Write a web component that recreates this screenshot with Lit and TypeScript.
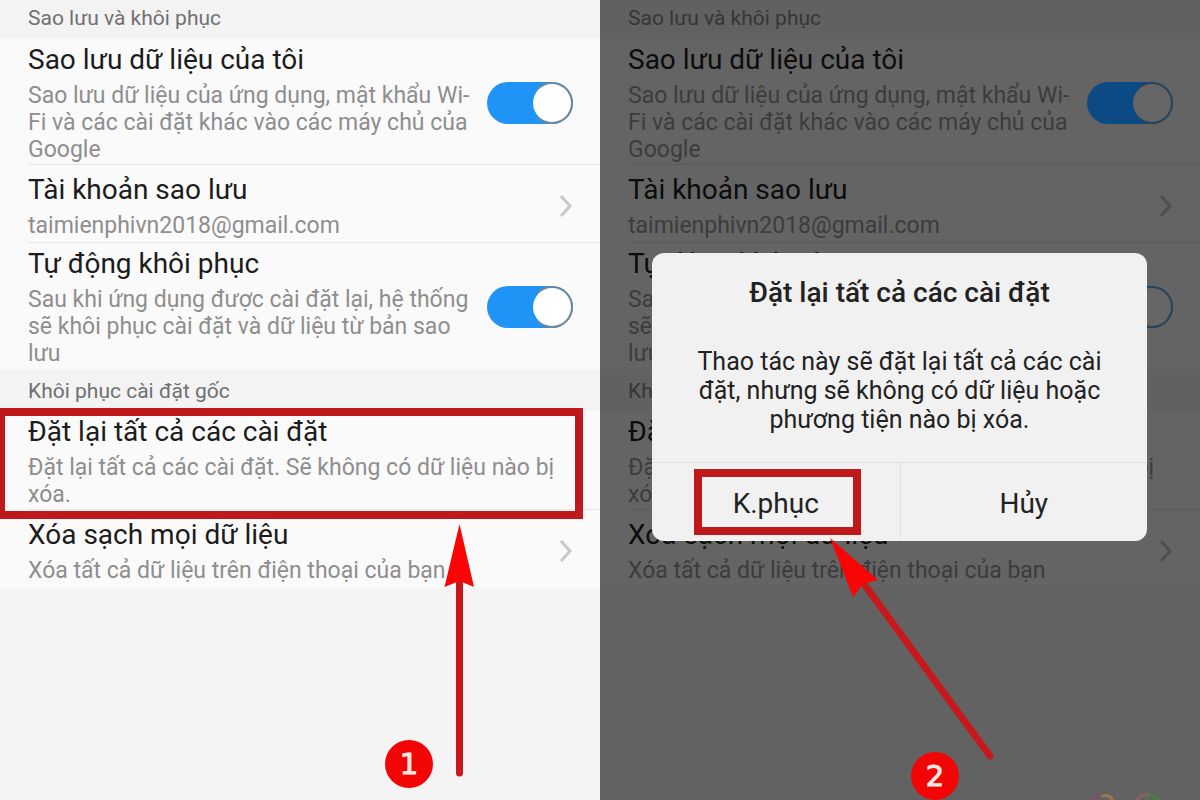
import { LitElement, html, svg, css, nothing } from "lit";
import { customElement, property } from "lit/decorators.js";

type Row = {
  id: string;
  title: string;
  text: string;
  kind: "toggle" | "link" | "action";
  marked?: boolean;
};

type Group = { heading: string; rows: Row[] };

const GROUPS: Group[] = [
  {
    heading: "Sao lưu và khôi phục",
    rows: [
      {
        id: "backup",
        title: "Sao lưu dữ liệu của tôi",
        text: "Sao lưu dữ liệu của ứng dụng, mật khẩu Wi-Fi và các cài đặt khác vào các máy chủ của Google",
        kind: "toggle",
      },
      { id: "account", title: "Tài khoản sao lưu", text: "taimienphivn2018@gmail.com", kind: "link" },
      {
        id: "restore",
        title: "Tự động khôi phục",
        text: "Sau khi ứng dụng được cài đặt lại, hệ thống sẽ khôi phục cài đặt và dữ liệu từ bản sao lưu",
        kind: "toggle",
      },
    ],
  },
  {
    heading: "Khôi phục cài đặt gốc",
    rows: [
      {
        id: "reset",
        title: "Đặt lại tất cả các cài đặt",
        text: "Đặt lại tất cả các cài đặt. Sẽ không có dữ liệu nào bị xóa.",
        kind: "action",
        marked: true,
      },
      { id: "wipe", title: "Xóa sạch mọi dữ liệu", text: "Xóa tất cả dữ liệu trên điện thoại của bạn", kind: "link" },
    ],
  },
];

@customElement("settings-list")
export class SettingsList extends LitElement {
  @property({ type: Boolean, reflect: true }) dimmed = false;

  static styles = css`
    :host {
      --row: #fafafa;
      --band: #f3f3f3;
      --title: #1c1c1c;
      --text: #8e8e8e;
      --heading: #707070;
      --line: #e6e6e6;
      --chevron: #c8c8c8;
      --track: #2094f6;
      --knob: #ffffff;
      --rim: #6f8796;
      display: block;
      color: var(--text);
    }
    :host([dimmed]) {
      --row: #646464;
      --band: #616161;
      --title: #0c0c0c;
      --text: #3c3c3c;
      --heading: #363636;
      --line: #5a5a5a;
      --chevron: #4f4f4f;
      --track: #0b4a84;
      --knob: #666666;
      --rim: #2c4358;
    }
    .heading {
      margin: 0;
      padding: 5px 28px 8px;
      background: var(--band);
      color: var(--heading);
      font-size: 21px;
      line-height: 26px;
      font-weight: 400;
    }
    .group + .group .heading {
      padding: 9px 28px 7px;
    }
    .rows {
      margin: 0;
      padding: 0;
      list-style: none;
      background: var(--row);
    }
    .item {
      position: relative;
    }
    .row {
      box-sizing: border-box;
      display: flex;
      align-items: center;
      gap: 12px;
      width: auto;
      margin-left: 28px;
      padding: 3px 27px 1px 0;
      border-bottom: 1px solid var(--line);
      color: inherit;
      text-decoration: none;
    }
    .row.link {
      padding: 7px 27px 3px 0;
    }
    .item:last-child .row {
      border-bottom-color: transparent;
    }
    button.row {
      width: calc(100% - 28px);
      border-width: 0 0 1px;
      background: none;
      font: inherit;
      text-align: left;
    }
    .copy {
      flex: 1;
      min-width: 0;
      display: flex;
      flex-direction: column;
      gap: 4px;
    }
    .title {
      color: var(--title);
      font-size: 28px;
      line-height: 36px;
    }
    .text {
      font-size: 23px;
      line-height: 27px;
    }
    .switch {
      appearance: none;
      flex: none;
      box-sizing: border-box;
      display: flex;
      justify-content: flex-end;
      width: 86px;
      height: 42px;
      margin: 0;
      border-radius: 21px;
      background: var(--track);
    }
    .switch::before {
      content: "";
      box-sizing: border-box;
      width: 42px;
      height: 42px;
      border: 2px solid var(--rim);
      border-left-color: var(--track);
      border-radius: 50%;
      background: var(--knob);
    }
    .chevron {
      flex: none;
      width: 14px;
      height: 24px;
      fill: none;
      stroke: var(--chevron);
      stroke-width: 3;
    }
    .frame {
      position: absolute;
      inset: -3px 17px -9px -3px;
      z-index: 1;
      border: 8px solid #c0191b;
      pointer-events: none;
    }
  `;

  private copy(row: Row) {
    return html`<span class="copy"
      ><span class="title">${row.title}</span><span class="text">${row.text}</span></span
    >`;
  }

  private row(row: Row) {
    if (row.kind === "toggle") {
      return html`<label class="row" for=${row.id}
        >${this.copy(row)}<input class="switch" id=${row.id} type="checkbox" role="switch" checked
      /></label>`;
    }
    if (row.kind === "link") {
      return html`<a class="row link" href="#${row.id}"
        >${this.copy(row)}<svg class="chevron" viewBox="0 0 14 24" aria-hidden="true">
          <path d="M2 2 L11 12 L2 22" /></svg
      ></a>`;
    }
    return html`<button class="row" type="button">${this.copy(row)}</button>`;
  }

  render() {
    return GROUPS.map(
      (group) => html`<section class="group">
        <h2 class="heading">${group.heading}</h2>
        <ul class="rows">
          ${group.rows.map(
            (row) => html`<li class="item">
              ${this.row(row)}${row.marked && !this.dimmed ? html`<div class="frame"></div>` : nothing}
            </li>`
          )}
        </ul>
      </section>`
    );
  }
}

@customElement("confirm-dialog")
export class ConfirmDialog extends LitElement {
  static styles = css`
    :host {
      display: block;
      overflow: hidden;
      border-radius: 12px;
      background: #f1f1f1;
      color: #222222;
      text-align: center;
    }
    .body {
      display: grid;
      gap: 36px;
      padding: 22px 40px 28px;
      border-bottom: 1px solid #e2e2e2;
    }
    .title {
      margin: 0;
      font-size: 28px;
      line-height: 36px;
      font-weight: 500;
    }
    .message {
      margin: 0;
      font-size: 25px;
      line-height: 29px;
    }
    .actions {
      display: grid;
      grid-template-columns: 1fr 1fr;
    }
    .cell {
      position: relative;
      display: grid;
    }
    .cell + .cell {
      border-left: 1px solid #e2e2e2;
    }
    .action {
      padding: 23px 0 19px;
      border: 0;
      background: none;
      color: inherit;
      font: inherit;
      font-size: 28px;
      line-height: 36px;
    }
    .frame {
      position: absolute;
      inset: 6px 39px 6px 42px;
      border: 8px solid #c0191b;
      pointer-events: none;
    }
  `;

  render() {
    return html`<div role="alertdialog" aria-labelledby="title" aria-describedby="message">
      <div class="body">
        <h2 class="title" id="title">Đặt lại tất cả các cài đặt</h2>
        <p class="message" id="message">
          Thao tác này sẽ đặt lại tất cả các cài đặt, nhưng sẽ không có dữ liệu hoặc phương tiện nào bị xóa.
        </p>
      </div>
      <div class="actions">
        <div class="cell">
          <button class="action" type="button">K.phục</button>
          <div class="frame"></div>
        </div>
        <div class="cell"><button class="action" type="button">Hủy</button></div>
      </div>
    </div>`;
  }
}

@customElement("app-root")
export class AppRoot extends LitElement {
  static styles = css`
    :host {
      display: grid;
      grid-template-columns: 1fr 1fr;
      min-height: 100vh;
      font-family: Roboto, "Noto Sans", sans-serif;
    }
    .panel {
      position: relative;
      overflow: hidden;
      background: #f4f4f4;
    }
    .panel.dark {
      background: #626262;
    }
    .dialog {
      position: absolute;
      top: 253px;
      left: 52px;
      right: 53px;
    }
    .drawing {
      position: absolute;
      top: 0;
      left: 0;
      width: 600px;
      height: 800px;
      pointer-events: none;
    }
    .shaft {
      fill: none;
      stroke: #c8181b;
      stroke-width: 7;
      stroke-linecap: round;
    }
    .head {
      fill: #fa0505;
    }
    .step {
      position: absolute;
      display: grid;
      place-items: center;
      width: 48px;
      height: 48px;
      border-radius: 50%;
      background: #f20505;
      color: #ffe9e0;
      font-family: "DejaVu Sans", sans-serif;
      font-size: 29px;
      line-height: 36px;
      -webkit-text-stroke: 1px #ffe9e0;
    }
    .step.one {
      left: 385px;
      top: 740px;
    }
    .step.two {
      left: 311px;
      top: 752px;
    }
  `;

  render() {
    return html`
      <main class="panel">
        <settings-list></settings-list>
        <svg class="drawing" viewBox="0 0 600 800" aria-hidden="true">
          ${svg`<path class="shaft" d="M459.500 580V773" />
          <path class="head" d="M459.500 524L474 587L459.500 581L444.500 587Z" />`}
        </svg>
        <span class="step one">1</span>
      </main>
      <section class="panel dark">
        <settings-list dimmed></settings-list>
        <confirm-dialog class="dialog"></confirm-dialog>
        <svg class="drawing" viewBox="0 0 600 800" aria-hidden="true">
          ${svg`<path class="shaft" d="M264 584L390 756" />
          <path class="head" d="M230 538L278 580L263 584L253 597Z" />
          <g fill="none" stroke-width="3">
            <path d="M491 800Q497 794 503 797" stroke="#7d4e70" />
            <path d="M501 797Q508 793 513 800" stroke="#9a7550" />
            <path d="M537 800Q542 793 550 795" stroke="#8d6068" />
            <path d="M546 798Q553 793 559 800" stroke="#4f7a42" />
          </g>`}
        </svg>
        <span class="step two">2</span>
      </section>
    `;
  }
}
